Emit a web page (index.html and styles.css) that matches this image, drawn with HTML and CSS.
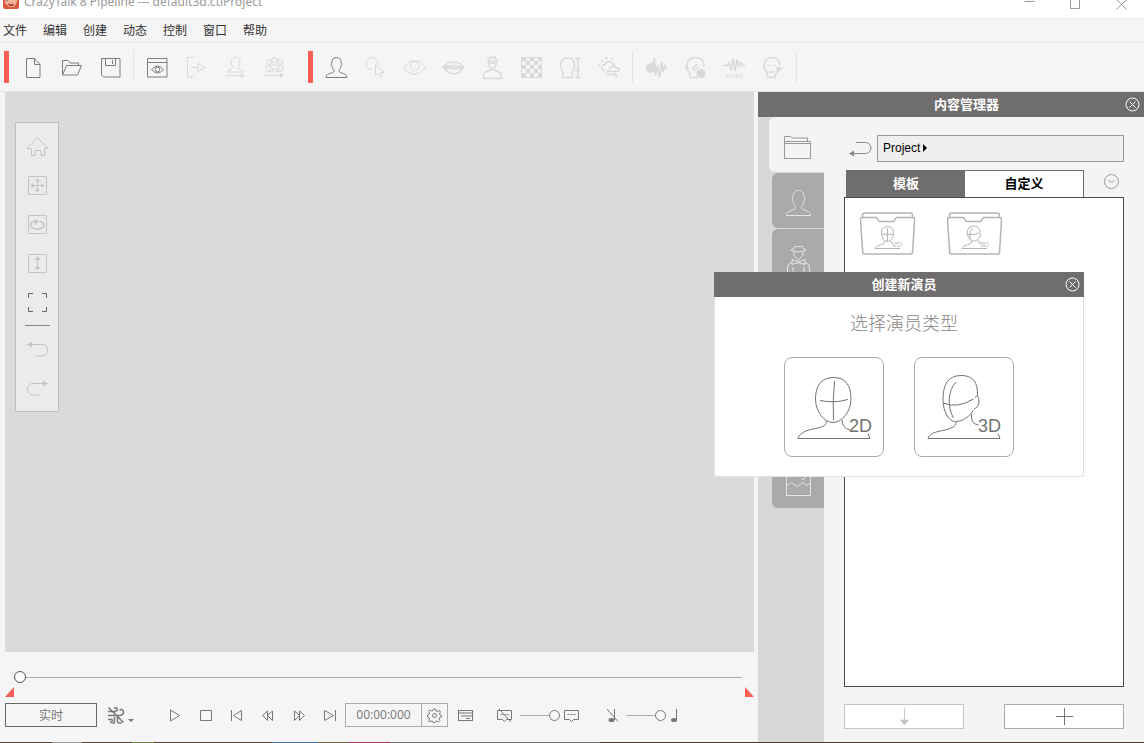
FILE: index.html
```html
<!DOCTYPE html>
<html lang="zh-CN">
<head>
<meta charset="utf-8">
<meta name="viewport" content="width=device-width, initial-scale=1">
<title>CrazyTalk 8 Pipeline --- default3d.ctiProject</title>
<link rel="stylesheet" href="styles.css">
</head>
<body>
<svg class="sprite" aria-hidden="true">
  <symbol id="person" viewBox="0 0 25 25"><path d="M2 22.500h21c-.3-2.600-2-3.700-5.500-4.600-2-.5-2.500-1-2.500-2.400 0-1 1.700-2 2-4.500 1-.6 1-2.500.2-3C17.200 4.500 15.700 2.500 12.500 2.500S7.800 4.500 7.800 8c-.8.5-.8 2.400.2 3 .3 2.500 2 3.500 2 4.500 0 1.400-.5 1.900-2.500 2.400C4 18.800 2.300 19.900 2 22.500z"/></symbol>
  <symbol id="close" viewBox="0 0 15 15"><circle cx="7.500" cy="7.500" r="6.500"/><path d="M4.500 4.500l6 6m0-6l-6 6"/></symbol>
  <symbol id="bubble" viewBox="0 0 15 15"><path d="M.5 2.500h14v9H9.500l-2 2-2-2H.5z"/><path d="M3.500 6.500h2m1 0h2m1 0h2"/></symbol>
</svg>
<div class="app">
  <header class="titlebar">
    <svg class="app-icon" viewBox="0 0 16 16"><rect width="16" height="16" rx="2" fill="#d9573f"/><path d="M2 0h12v9l-3 5H6l-4-4z" fill="#f2b295"/><path d="M3 7l3-1m3 0l4-1" stroke="#6d3328" stroke-width="1.500"/><path d="M5 10q3 3 6 0l-1 3H6z" fill="#a62e2c"/></svg>
    <span class="app-title">CrazyTalk 8 Pipeline --- default3d.ctiProject</span>
    <div class="window-buttons">
      <button aria-label="最小化"><svg viewBox="0 0 11 11"><path d="M.5 5.500h10"/></svg></button>
      <button aria-label="最大化"><svg viewBox="0 0 11 11"><path d="M.5.5h9v9h-9z"/></svg></button>
      <button aria-label="关闭"><svg viewBox="0 0 11 11"><path d="M.5.5l10 10m0-10l-10 10"/></svg></button>
    </div>
  </header>
  <nav class="menubar">
    <button>文件</button><button>编辑</button><button>创建</button><button>动态</button><button>控制</button><button>窗口</button><button>帮助</button>
  </nav>
  <div class="toolbar">
    <i class="grip"></i>
    <button class="tool" aria-label="新建"><svg viewBox="0 0 25 25"><path d="M6.500 3.500h8l5.500 6v13H6.500zM14.500 3.500v6h5.500"/></svg></button>
    <button class="tool" aria-label="打开"><svg viewBox="0 0 25 25"><path d="M3.500 20V5.500h5.500l2 2.500h8.500v2.500M3.500 20l4-9.500h15l-4 9.500z"/></svg></button>
    <button class="tool" aria-label="保存"><svg viewBox="0 0 25 25"><path d="M3.500 3.500h18.500v18.500H5.500l-2-2zM7.500 3.500v7h10v-7M14.500 5v4"/></svg></button>
    <i class="rule"></i>
    <button class="tool" aria-label="预览"><svg viewBox="0 0 25 25"><path d="M2.500 3.500h19.500v18.500h-19.500zM2.500 7.500h19.500M6.500 14.500q6-7 12 0-6 7-12 0z"/><circle cx="12.500" cy="14.500" r="2.300"/></svg></button>
    <button class="tool" aria-label="导出" disabled><svg viewBox="0 0 25 25"><path d="M10 2.500H3.500v19.500H10M7 12.500h7m0-4l7 4-7 4z"/></svg></button>
    <button class="tool" aria-label="导出演员" disabled><svg viewBox="0 0 25 25"><path d="M4.500 17c.3-2 2-2.500 4.500-3.200 1.500-.5 1.500-1.500.8-2.300C8.500 10 8 8.500 8 6.500c0-6 9-6 9 0 0 2-.5 3.500-1.800 5-.7.800-.7 1.800.8 2.300 2.500.7 4.200 1.200 4.500 3.200zM2.500 20.500h16"/><path class="solid" d="M18 18l4 2.500-4 2.500z"/></svg></button>
    <button class="tool" aria-label="导出群组" disabled><svg viewBox="0 0 25 25"><circle cx="7" cy="7" r="2.500"/><circle cx="12.500" cy="5.500" r="2.700"/><circle cx="18" cy="7" r="2.500"/><path d="M8.500 17v-5c1-3 7-3 8 0v5h-2v-3h-4v3zM8 10.500c-2-.5-4 .5-4 3l1 3h3M17 10.500c2-.5 4 .5 4 3l-1 3h-3M2.500 20.500h16"/><path class="solid" d="M18 18l4 2.500-4 2.500z"/></svg></button>
    <i class="grip second"></i>
    <button class="tool" aria-label="创建演员"><svg><use href="#person"/></svg></button>
    <button class="tool" aria-label="选取" disabled><svg viewBox="0 0 25 25"><path d="M9 14.500H8a6 6 0 1 1 7-6M12.500 9.500v11l2.500-2 2.500 4 2-1-2-4h3.500z"/></svg></button>
    <button class="tool" aria-label="眼睛" disabled><svg viewBox="0 0 25 25"><path d="M1.500 12.500q11-14 22 0-11 14-22 0z"/><circle cx="12.500" cy="11" r="4.500"/></svg></button>
    <button class="tool" aria-label="嘴部" disabled><svg class="bold" viewBox="0 0 25 25"><path d="M2 12q6-5 8-5 1.500 0 2.500 1 1-1 2.500-1 2 0 8 5-10 14-21 0zM2 12q5 0 8-1 2.500 1 5 0 3 1 8 1-10 3.500-21 0z"/></svg></button>
    <button class="tool" aria-label="服饰" disabled><svg class="bold" viewBox="0 0 25 25"><path d="M3.500 23.500v-3q0-3 5-4.500l3-1.500h2l3 1.500q5 1.500 5 4.500v3zM7 5.500q5.500 2 11 0M8.500 5l1.500-3 2.500 1 2.500-1 1.500 3M8.500 7q0 5 4 7.500 4-2.500 4-7.500M9.500 7.500q3 2 6 0"/></svg></button>
    <button class="tool" aria-label="背景" disabled><svg viewBox="0 0 25 25"><path d="M2.500 2.500h20v20h-20z"/><path class="solid" d="M2 2h5v4H2zM11 2h4v4h-4zM19 2h4v4h-4zM7 6h4v4H7zM15 6h4v4h-4zM2 10h5v4H2zM11 10h4v4h-4zM19 10h4v4h-4zM7 14h4v4H7zM15 14h4v4h-4zM2 18h5v5H2zM11 18h4v5h-4zM19 18h4v5h-4z"/></svg></button>
    <button class="tool" aria-label="头部方向" disabled><svg class="bold" viewBox="0 0 25 25"><path d="M5 22.500h9v-5q1.500-2 2-5 1-3 0-5-1-4.500-6.500-4.500T3 7.500q-1 2 0 5 .5 3 2 5zM17 15.500h5M17 3.500h5.500m-5.500 19h5.500M20 3.500v19"/></svg></button>
    <button class="tool" aria-label="环境" disabled><svg class="bold" viewBox="0 0 25 25"><path d="M8 15.500q-4 0-3-4 1-2 3-2 1-3 4.500-3 4 0 4.500 4M9.500 16.500h11q3-1 1.500-3-1-1-2.500 0-1-3-4-2t-3 3M9.500 19.500h9q2 1 0 3M1.500 9.500l2 1M4 5l2 2m3.500-5v2.500m6-1.500l-1 2"/></svg></button>
    <i class="rule"></i>
    <button class="tool" aria-label="录音" disabled><svg class="bold" viewBox="0 0 25 25"><circle class="solid" cx="7" cy="13" r="5"/><path d="M8.500 9l2-6 1 18 2-11 2 13 2-16 1.500 10 1.500-6 1 2h2"/></svg></button>
    <button class="tool" aria-label="声音" disabled><svg class="bold" viewBox="0 0 25 25"><path d="M15 22.500H7v-4q-3-4-3-7 0-9 8.500-9t8.500 9M4 10q-3 2 .5 5M9.500 15q1-4 5-6M11.500 16q1-2 4-4"/><circle class="solid" cx="18" cy="18.500" r="4.500"/></svg></button>
    <button class="tool" aria-label="自动" disabled><svg class="bold" viewBox="0 0 25 25"><path d="M1 10.500h4l2-3 2 8 2-12 2 13 2-12 2 7 2-4 1.500 3H23"/><text x="12.500" y="22.500">AUTO</text></svg></button>
    <button class="tool" aria-label="面部动作" disabled><svg class="bold" viewBox="0 0 25 25"><path d="M6.500 22.500h8v-4q3-2 4-4M3.500 9.500v-1q1-6 7.500-6t8 6v2M3.500 9q-1.500 3 .5 5 1 3 2.500 4.500v4M6.500 10.500h2m4 0h2M8 16.500q2.500 1.500 5 0"/><path class="solid" d="M15.500 11l7 2.500-7 3z"/></svg></button>
    <i class="rule"></i>
  </div>
  <main class="workspace">
    <section class="stage">
      <div class="canvas">
        <div class="palette">
          <button aria-label="主页" disabled><svg viewBox="0 0 25 25"><path d="M2 14.500l10.500-11 10.500 11h-3.500v7h-3.500v-5h-6v5H6.500v-7z"/></svg></button>
          <button aria-label="移动" disabled><svg viewBox="0 0 25 25"><path d="M3.500 3.500h18v18h-18zM12.500 7v11M7 12.500h11"/><path class="solid" d="M12.500 5.500L15 8.500h-5zM12.500 19.500l2.500-3h-5zM5.500 12.500l3-2.500v5zM19.500 12.500l-3-2.500v5z"/></svg></button>
          <button aria-label="旋转" disabled><svg class="bold" viewBox="0 0 25 25"><path stroke-width="1" d="M3.500 3.500h18v18h-18z"/><path d="M14.500 9.500c6 .5 6 7.500-2 7.500s-9-6.500-3-7.500"/><path class="solid" d="M9 7l5 2.500-4 3z"/></svg></button>
          <button aria-label="缩放" disabled><svg viewBox="0 0 25 25"><path d="M3.500 3.500h18v18h-18zM12.500 7v11"/><path class="solid" d="M12.500 5.500l3 3.500h-6zM12.500 19.500l3-3.500h-6z"/></svg></button>
          <button aria-label="全屏"><svg viewBox="0 0 25 25"><path d="M3.500 8V3.500H8M17 3.500h4.500V8M21.500 17v4.500H17M8 21.500H3.500V17"/></svg></button>
          <i class="divider"></i>
          <button aria-label="撤销" disabled><svg viewBox="0 0 25 25"><path d="M6 7.500h11a5 5 0 0 1 0 11.500h-7"/><path class="solid" d="M2 7.500l5-3v6z"/></svg></button>
          <button aria-label="重做" disabled><svg viewBox="0 0 25 25"><path d="M19 7.500H8a5 5 0 0 0 0 11.500h7"/><path class="solid" d="M23 7.500l-5-3v6z"/></svg></button>
        </div>
      </div>
      <div class="timeline">
        <input class="slider track" type="range" min="0" max="100" value="0" aria-label="时间轴">
        <div class="markers"><i class="in"></i><i class="out"></i></div>
        <div class="transport">
          <button class="realtime">实时</button>
          <button class="effects" aria-label="效果"><svg class="bold" viewBox="0 0 27 19"><path d="M1 5.500h7q3-1 2-3-1-1.500-3 0M1 9.500h12q4-1 3.500-4-1-3-4-1.500M1 13.500h4q1 3-2 3M7.500 11v4q0 3-2 2M10.500 11v4q0 3 4 1.500M1.500 1.500l15 15"/><path class="solid" d="M21 13h6l-3 3z"/></svg></button>
          <div class="playback">
            <button aria-label="播放"><svg viewBox="0 0 15 15"><path d="M3.500 2l9 5.500-9 5.500z"/></svg></button>
            <button aria-label="停止"><svg viewBox="0 0 15 15"><path d="M2.500 2.500h11v10h-11z"/></svg></button>
            <button aria-label="开头"><svg viewBox="0 0 15 15"><path d="M2.500 2v11M12.500 2.500v10l-8-5z"/></svg></button>
            <button aria-label="快退"><svg viewBox="0 0 15 15"><path d="M7.500 3v9.500l-5-5zM12.500 3v9.500l-5-5z"/></svg></button>
            <button aria-label="快进"><svg viewBox="0 0 15 15"><path d="M3.500 3v9.500l5-5zM8.500 3v9.500l5-5z"/></svg></button>
            <button aria-label="结尾"><svg viewBox="0 0 15 15"><path d="M13.500 2v11M2.500 2.500v10l9-5z"/></svg></button>
          </div>
          <div class="timebox">
            <input type="text" value="00:00:000" aria-label="时间">
            <button aria-label="设置"><svg viewBox="0 0 15 15"><circle cx="7.500" cy="7.500" r="2"/><path d="M6.500 1h2l.5 2 1.500.5 2-1 1 1.500-1 1.500.5 1.500 1.500.5v1.500l-2 .5-.5 1.500 1 1.500-1.500 1.500-2-1-1 .5-.5 1.500h-1.500l-.5-1.500-1.500-.5-2 1L1.500 12l1-1.500L2 9.500.5 9V7L2 6.500l.5-1.500-1-1.500L3 2l1.500 1L6 2.500z"/></svg></button>
          </div>
          <button class="mini list" aria-label="轨道"><svg viewBox="0 0 15 15"><path d="M.5 2v11M14.500 2v11M0 2.500h15M0 5h15M3 8h11M8 10.500h4M0 12.500h15"/></svg></button>
          <button class="mini" aria-label="隐藏气泡"><svg viewBox="0 0 15 15"><use href="#bubble"/><path d="M2 1l12 13"/></svg></button>
          <input class="slider" type="range" min="0" max="100" value="100" aria-label="气泡">
          <button class="mini" aria-label="显示气泡"><svg><use href="#bubble"/></svg></button>
          <button class="mini music" aria-label="静音"><svg viewBox="0 0 15 15"><path d="M2 1l11 12.500M9.500 1v11"/><ellipse class="solid" cx="6.500" cy="12" rx="3" ry="2"/></svg></button>
          <input class="slider" type="range" min="0" max="100" value="100" aria-label="音量">
          <button class="mini" aria-label="音乐"><svg viewBox="0 0 15 15"><path d="M10.500 1v11"/><ellipse class="solid" cx="8" cy="12" rx="3" ry="2"/></svg></button>
        </div>
      </div>
    </section>
    <aside class="manager">
      <header class="panel-head"><h2>内容管理器</h2><button aria-label="关闭"><svg><use href="#close"/></svg></button></header>
      <div class="manager-body">
        <nav class="categories">
          <button class="active" aria-label="项目"><svg viewBox="0 0 31 31"><path d="M3.500 9.500h26v17h-26zM3.500 9.500v-5h6l2 1.500h15v3.500M3.500 11.500h26"/></svg></button>
          <button aria-label="演员"><svg viewBox="0 0 31 31"><path d="M3.500 27.500h24c0-3-2-4-6-5.500-2.500-.7-3-1.500-3-3.500 2-2 2.500-4 2.500-6 1-1 .7-2 .3-3C20.500 4 18.500 2.500 15.500 2.500S10.500 4 9.700 9.500c-.4 1-.7 2 .3 3 0 2 .5 4 2.500 6 0 2-.5 2.800-3 3.500-4 1.500-6 2.500-6 5.500z"/></svg></button>
          <button aria-label="服饰"><svg viewBox="0 0 31 31"><path d="M8 6q7.500 4 15 0-1-1-3-1.500l-1-2.500-3.500.7L12 2l-1 2.500Q9 5 8 6zM10.500 7.500q-.5 5 5 8.500 5.500-3.500 5-8.500M9 15.500l5 2h3l5-2v5l-5-1.500h-3l-5 1.500zM4.500 30v-7q0-3 4.500-4.500M26.500 30v-7q0-3-4.500-4.500M10 23v5m11-5v5"/></svg></button>
          <button aria-label="动作"></button>
          <button aria-label="语音"></button>
          <button aria-label="场景"></button>
          <button aria-label="图片"><svg viewBox="0 0 31 31"><path d="M3.500 4.500h24v23h-24zM3.500 17.500l5-3 6 4 5.500-4 4 3 3.500-3M18 10l2 2 3-3"/></svg></button>
        </nav>
        <div class="library">
          <div class="path-row">
            <button aria-label="返回"><svg viewBox="0 0 25 25"><path d="M8 6.500h9.500a5 5 0 0 1 0 11H4"/><path class="solid" d="M1 17.500l5-3v6z"/></svg></button>
            <a class="path" href="#project">Project <svg viewBox="0 0 4 8"><path d="M0 0l4 4-4 4z"/></svg></a>
          </div>
          <div class="tab-row">
            <div class="tabs"><button class="selected">模板</button><button>自定义</button></div>
            <button class="more" aria-label="更多"><svg viewBox="0 0 15 15"><circle cx="7.500" cy="7.500" r="7"/><path d="M4.500 6l3 3 3-3"/></svg></button>
          </div>
          <div class="items">
            <button aria-label="2D"><svg class="folder" viewBox="0 0 56 44"><path d="M3 42Q1.500 26 .5 7q0-1.500 2-1.500h14l3 4h14l3-4h16q2 0 2 1.500Q53.500 26 52.500 40.500q0 1.500-2 1.500H4q-1.500 0-1.500-1.500M2.500 5V3q0-2 2-2h46q2 0 2 2v2"/></svg><svg class="bust" viewBox="0 0 28 25"><path d="M1 23.500h25M1 23.500q1-3 5-3.500 5-1 5-4M17 16q0 3 3 4M13.500 1.500c-8 0-7 10-3 14q3 2 6 0c4-4 5-14-3-14zM13.500 3v13M8 9q5 1 12 0"/><text x="19" y="22">2D</text></svg></button>
            <button aria-label="3D"><svg class="folder" viewBox="0 0 56 44"><path d="M3 42Q1.500 26 .5 7q0-1.500 2-1.500h14l3 4h14l3-4h16q2 0 2 1.500Q53.500 26 52.500 40.500q0 1.500-2 1.500H4q-1.500 0-1.500-1.500M2.500 5V3q0-2 2-2h46q2 0 2 2v2"/></svg><svg class="bust" viewBox="0 0 28 25"><path d="M1 23.500h25M1 23.500q1-3 5-3.500 5-1 5-4M17 15q0 3 3 4M6 9q0-8 7-8 6 0 6 7 2 2-1 5-3 4-7 3-4-2-5-7zM11 3q-4 6-1 12M6 9q6 2 12-1"/><text x="19" y="22">3D</text></svg></button>
          </div>
          <div class="actions">
            <button aria-label="应用" disabled><svg viewBox="0 0 25 25"><path d="M12.500 3v14"/><path class="solid" d="M7.500 16h10l-5 6z"/></svg></button>
            <button aria-label="添加"><svg viewBox="0 0 25 25"><path d="M12.500 3v19M3 12.500h19"/></svg></button>
          </div>
        </div>
      </div>
    </aside>
  </main>
  <footer class="desktop-edge"></footer>
  <section class="dialog" role="dialog" aria-labelledby="dialog-title">
    <header class="panel-head"><h2 id="dialog-title">创建新演员</h2><button aria-label="关闭"><svg><use href="#close"/></svg></button></header>
    <p>选择演员类型</p>
    <div class="choices">
      <button aria-label="2D"><svg viewBox="0 0 98 98"><path d="M48.500 19.500C36 19.500 30.500 28 30.500 41c0 13 9 23.500 17.500 23.500S66 54 66 41c0-13-5-21.500-17.500-21.500zM49.500 23q-2 20-1 39M35 42.500q14 3 28-1M41.500 63c0 4-3 6-11 7.500-11 2-16 5-17.500 10h72l-2-5M57 62q0 8 8 10"/><text x="64" y="74">2D</text></svg></button>
      <button aria-label="3D"><svg viewBox="0 0 98 98"><path d="M60 39.500l2.500-2C63 24 58 17.500 46 17.500 33 17.500 28 27 28 41c0 12 5 22.500 12.500 22.500C48 63.500 55 58 58.500 52M62.500 37.500c2.500 5 2 11-3.500 13.500M41 24c-8 8-9 25-2.500 36M28.500 45q13 6 30-4M41 64c0 4-3 6-11 8-11 2-16 4-17 8.500h72l-2-5M56.500 56q-1 10 7 11"/><text x="63" y="74">3D</text></svg></button>
    </div>
  </section>
</div>
</body>
</html>
```
FILE: styles.css
```css
* { box-sizing: border-box; }
body { margin: 0; background: #f5f5f5; color: #333; font: 12px/16px "Liberation Sans", "Noto Sans CJK SC", sans-serif; }
button, input { font: inherit; color: inherit; margin: 0; padding: 0; border: 0; background: none; }
svg { display: block; fill: none; stroke: currentColor; stroke-width: 1; }
svg text { font-family: "Liberation Sans", sans-serif; fill: currentColor; stroke: none; }
.solid { fill: currentColor; stroke: none; }
.bold { stroke-width: 1.5; }
.sprite { position: absolute; width: 0; height: 0; }
h2, p { margin: 0; }

.app { position: relative; display: flex; flex-direction: column; min-height: 100vh; }

.titlebar { display: flex; align-items: flex-end; height: 17px; padding: 0 17px 5px 3px; overflow: hidden; background: #fff; color: #999; }
.app-icon { width: 16px; height: 16px; margin-bottom: 3px; stroke: none; }
.app-title { flex: 1; margin-left: 5px; font: 12px/20px "Noto Sans", sans-serif; }
.window-buttons { display: flex; gap: 35px; }
.window-buttons svg { width: 11px; height: 11px; }
.window-buttons button:first-child svg { margin-bottom: 5px; }

.menubar { display: flex; gap: 16px; padding: 6px 3px 3px; border-bottom: 1px solid #e6e6e6; }

.toolbar { display: flex; padding: 8px 0 8px 4px; border-bottom: 1px solid #e2e2e2; color: #7d7d7d; }
.grip { width: 5px; height: 32px; margin-right: 4px; background: #ff5f57; }
.grip.second { margin-left: 14px; }
.rule { width: 1px; height: 32px; margin: 0 4px 0 3px; background: #e4e4e4; }
.tool { width: 39px; padding: 4px 7px 3px; }
.tool svg { width: 25px; height: 25px; }
.tool:disabled { color: #d9d9d9; }
.tool text { font-size: 6px; font-weight: bold; text-anchor: middle; }

.workspace { flex: 1; display: flex; gap: 4px; }
.stage { flex: 1; display: flex; flex-direction: column; padding-left: 5px; }
.canvas { flex: 1; padding: 30px 10px; background: #dadada; }
.palette { display: flex; flex-direction: column; align-items: center; width: 44px; padding: 4px 0 3px; border: 1px solid #bfbfbf; background: #ebebeb; color: #666; }
.palette button { padding: 7px; }
.palette button:disabled { color: #c4c4c4; }
.palette svg { width: 25px; height: 25px; }
.divider { width: 25px; height: 1px; margin: 3px 0 4px; background: #858585; }

.timeline { padding: 17px 0 15px; color: #777; }
.slider { appearance: none; display: block; height: 16px; background: linear-gradient(#aaa, #aaa) center / 100% 1px no-repeat; }
.slider::-webkit-slider-thumb { appearance: none; width: 11px; height: 11px; border: 1px solid #777; border-radius: 50%; background: #fafafa; }
.track { width: calc(100% - 21px); margin-left: 9px; }
.track::-webkit-slider-thumb { width: 12px; height: 12px; border-color: #555; }
.markers { display: flex; justify-content: space-between; margin: 2px 0 6px; }
.markers i { width: 9px; height: 10px; background: #ff5f57; }
.in { clip-path: polygon(100% 0, 100% 100%, 0 100%); }
.out { clip-path: polygon(0 0, 100% 100%, 0 100%); }
.transport { display: flex; align-items: center; height: 24px; }
.realtime { width: 92px; height: 24px; padding-top: 2px; border: 1px solid #666; }
.effects { margin-left: 10px; }
.effects svg { width: 27px; height: 19px; }
.playback { display: flex; margin-left: 25px; }
.playback button { padding: 0 8px; }
.playback svg, .mini svg, .timebox svg { width: 15px; height: 15px; }
.timebox { display: flex; width: 103px; height: 24px; border: 1px solid #aaa; }
.timebox input { flex: 1; min-width: 0; text-align: center; font: 12px/16px "Open Sans", sans-serif; }
.timebox button { padding: 0 5px; border-left: 1px solid #aaa; }
.list { margin: 0 24px 0 10px; }
.transport > .slider { width: 40px; margin: 0 4px 0 8px; }
.music { margin-left: 26px; }
.music + .slider { margin: 0 0 0 6px; }

.panel-head { display: flex; align-items: center; height: 25px; background: #706d6e; color: #fff; }
.panel-head h2 { flex: 1; text-align: center; font-size: 13px; line-height: 16px; }
.panel-head svg { width: 15px; height: 15px; }
.manager { display: flex; flex-direction: column; width: 386px; }
.manager .panel-head { padding: 0 4px 0 50px; }
.manager-body { flex: 1; display: flex; background: #f4f4f4; }
.categories { display: flex; flex-direction: column; align-items: flex-end; gap: 1px; width: 66px; background: #d7d7d7; }
.categories button { display: flex; justify-content: center; align-items: center; width: 52px; height: 55px; padding-top: 6px; border-radius: 6px 0 0 6px; background: #aaa; color: #e5e5e5; }
.categories .active { width: 55px; background: #f4f4f4; color: #999; }
.categories svg { width: 31px; height: 31px; }
.library { flex: 1; display: flex; flex-direction: column; padding: 18px 20px 13px; }
.path-row { display: flex; align-items: center; gap: 4px; padding-left: 4px; color: #888; }
.path-row button svg { width: 25px; height: 25px; }
.path { flex: 1; display: flex; align-items: center; gap: 3px; height: 27px; padding: 0 5px 2px; border: 1px solid #999; background: #efefef; color: #000; text-decoration: none; }
.path svg { width: 4px; height: 8px; fill: #000; stroke: none; }
.tab-row { display: flex; align-items: flex-start; margin-top: 8px; padding: 0 5px 0 2px; }
.tabs { flex: 1; display: flex; max-width: 238px; border: 1px solid #706d6e; border-bottom: 0; font-size: 13px; font-weight: bold; }
.tabs button { flex: 1; height: 26px; background: #fff; color: #000; }
.tabs .selected { background: #706d6e; color: #fff; }
.more { margin: 4px 0 0 auto; color: #999; }
.more svg { width: 15px; height: 15px; }
.items { flex: 1; display: flex; align-items: flex-start; gap: 31px; padding: 14px 15px; border: 1px solid #4b4b4b; background: #fff; color: #b5b5b5; }
.items button { display: grid; justify-items: center; }
.items svg { grid-area: 1 / 1; }
.folder { width: 56px; height: 44px; stroke-width: 1.5; }
.bust { width: 28px; height: 25px; margin-top: 13px; }
.items text { font-size: 7px; }
.actions { display: flex; justify-content: space-between; margin-top: 17px; }
.actions button { display: flex; justify-content: center; align-items: center; width: 120px; height: 25px; border: 1px solid #aaa; background: #fff; color: #666; }
.actions button:disabled { border-color: #c5c5c5; color: #c4c4c4; }
.actions svg { width: 25px; height: 23px; }

.desktop-edge { height: 1px; background: linear-gradient(90deg, #554437 52px, #999 52px 82px, #554437 82px 132px, #75863a 132px 154px, #554437 154px 272px, #4670af 272px 318px, #756044 318px 349px, #b13661 349px 391px, #777 391px 600px, #4b3b34 600px); }

.dialog { position: absolute; top: 272px; right: 60px; width: 370px; border: 1px solid #e2e2e2; border-top: 0; background: #fff; }
.dialog .panel-head { margin: 0 -1px; padding: 0 4px 0 29px; }
.dialog p { padding: 14px 0 24px 10px; text-align: center; color: #8b8583; font: 300 18px/22px "Noto Sans CJK SC", sans-serif; }
.choices { display: flex; justify-content: center; gap: 30px; padding-bottom: 19px; }
.choices button { width: 100px; height: 100px; border: 1px solid #aaa; border-radius: 8px; color: #727272; }
.choices svg { width: 98px; height: 98px; }
.choices text { font-size: 18px; }
```
